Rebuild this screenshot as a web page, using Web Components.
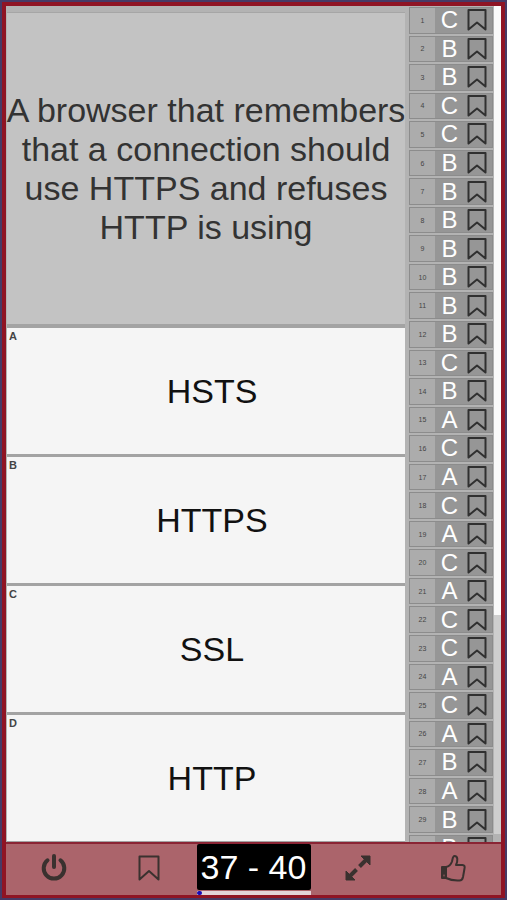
<!DOCTYPE html>
<html lang="en">
<head>
<meta charset="UTF-8">
<meta name="viewport" content="width=device-width, initial-scale=1">
<title>Quiz</title>
<style>
    body {
        margin: 0;
        font-family: "Liberation Sans", Arial, sans-serif;
    }
</style>
</head>
<body>
<quiz-app>
    <question-panel slot="question">A browser that remembers<br>that a connection should<br>use HTTPS and refuses<br>HTTP is using</question-panel>
    <answer-option slot="options" letter="A">HSTS</answer-option>
    <answer-option slot="options" letter="B">HTTPS</answer-option>
    <answer-option slot="options" letter="C">SSL</answer-option>
    <answer-option slot="options" letter="D">HTTP</answer-option>
    <answer-sheet slot="sheet" answers="CBBCCBBBBBBBCBACACACACCACABABB"></answer-sheet>
    <quiz-toolbar slot="toolbar">37 - 40</quiz-toolbar>
</quiz-app>

<script>
class QuizApp extends HTMLElement {
    constructor() {
        super();
        this.attachShadow({ mode: 'open' });
    }

    connectedCallback() {
        this.shadowRoot.innerHTML = `
            <style>
                :host {
                    display: flex;
                    height: 100vh;
                    box-sizing: border-box;
                    border: 2px solid #463a66;
                    background: #8f1424;
                }

                .frame {
                    flex: 1;
                    min-width: 0;
                    display: flex;
                    flex-direction: column;
                    border: 4px solid #8f1424;
                    border-bottom-width: 3px;
                }

                .content {
                    flex: 1;
                    min-height: 0;
                    display: flex;
                    background: #b3b3b3;
                }

                main {
                    flex: 1;
                    min-width: 0;
                    display: flex;
                    flex-direction: column;
                    padding: 0 1px;
                }

                .options {
                    flex: 1;
                    display: flex;
                    flex-direction: column;
                    gap: 3px;
                    padding-top: 4px;
                    padding-bottom: 1px;
                    background: #a3a3a3;
                }
            </style>
            <div class="frame">
                <div class="content">
                    <main>
                        <slot name="question"></slot>
                        <div class="options"><slot name="options"></slot></div>
                    </main>
                    <slot name="sheet"></slot>
                </div>
                <slot name="toolbar"></slot>
            </div>
        `;
    }
}

class QuestionPanel extends HTMLElement {
    constructor() {
        super();
        this.attachShadow({ mode: 'open' });
    }

    connectedCallback() {
        this.shadowRoot.innerHTML = `
            <style>
                :host {
                    display: flex;
                    flex: 0 0 312px;
                    align-items: center;
                    justify-content: center;
                    box-sizing: border-box;
                    margin-top: 6px;
                    padding-top: 1px;
                    border-top: 1px solid #a6a6a6;
                    background: #c3c3c3;
                    color: #333333;
                }

                p {
                    margin: 0;
                    font-size: 34px;
                    line-height: 39px;
                    text-align: center;
                    white-space: nowrap;
                }
            </style>
            <p><slot></slot></p>
        `;
    }
}

class AnswerOption extends HTMLElement {
    constructor() {
        super();
        this.attachShadow({ mode: 'open' });
    }

    connectedCallback() {
        this.shadowRoot.innerHTML = `
            <style>
                :host {
                    display: flex;
                    flex: 1;
                }

                button {
                    flex: 1;
                    position: relative;
                    display: flex;
                    align-items: center;
                    justify-content: center;
                    padding: 0 0 0 12px;
                    border: 0;
                    background: #f5f5f5;
                    color: #111111;
                    font: inherit;
                    font-size: 34px;
                    cursor: pointer;
                }

                .letter {
                    position: absolute;
                    top: 2px;
                    left: 2px;
                    color: #444444;
                    font-size: 11px;
                    font-weight: 700;
                    line-height: 12px;
                }
            </style>
            <button type="button">
                <span class="letter">${this.getAttribute('letter')}</span>
                <slot></slot>
            </button>
        `;
    }
}

class AnswerSheet extends HTMLElement {
    constructor() {
        super();
        this.attachShadow({ mode: 'open' });
    }

    connectedCallback() {
        const rows = [...this.getAttribute('answers')].map((answer, i) => `
            <li>
                <div class="row">
                    <span class="number">${i + 1}</span>
                    <span class="answer">${answer}</span>
                    <button type="button" aria-label="Bookmark question ${i + 1}">
                        <svg width="20" height="22" viewBox="0 0 20 22" fill="none" stroke="#303030" stroke-width="2" stroke-linejoin="round">
                            <path d="M1.5 1h17v19.5L10 13.5 1.5 20.5z"/>
                        </svg>
                    </button>
                </div>
            </li>
        `).join('');

        this.shadowRoot.innerHTML = `
            <style>
                :host {
                    display: flex;
                    flex: 0 0 95px;
                    min-height: 0;
                }

                ul {
                    flex: 1;
                    display: flex;
                    flex-direction: column;
                    margin: 0;
                    padding: 1px 1px 0 3px;
                    list-style: none;
                }

                li {
                    flex: 1 0 0;
                    display: flex;
                    flex-direction: column;
                    overflow: hidden;
                    min-height: 0;
                }

                /* the list is cut off partway through its last row */
                li:last-child {
                    flex: 0 0 7px;
                }

                .row {
                    flex: 1 0 26px;
                    display: grid;
                    grid-template-columns: 25px 1fr 31px;
                    align-items: center;
                    box-sizing: border-box;
                    margin-bottom: 2px;
                    border: 1px solid #8c8c8c;
                    background: #969696;
                }

                .number {
                    align-self: stretch;
                    display: flex;
                    align-items: center;
                    justify-content: center;
                    background: #acacac;
                    color: #444444;
                    font-size: 7px;
                }

                .answer {
                    padding-left: 3px;
                    color: #ffffff;
                    font-size: 24px;
                    line-height: 24px;
                    text-align: center;
                }

                button {
                    display: flex;
                    justify-content: center;
                    padding: 0;
                    border: 0;
                    background: none;
                    cursor: pointer;
                }

                .scrollbar {
                    width: 7px;
                    margin-bottom: 8px;
                    background: #cecece;
                }

                .thumb {
                    height: 73.5%;
                    background: #fafafa;
                }
            </style>
            <ul>${rows}</ul>
            <div class="scrollbar"><div class="thumb"></div></div>
        `;
    }
}

class QuizToolbar extends HTMLElement {
    constructor() {
        super();
        this.attachShadow({ mode: 'open' });
    }

    connectedCallback() {
        this.shadowRoot.innerHTML = `
            <style>
                :host {
                    display: grid;
                    grid-template-columns: 1fr 1fr 114px 1fr 1fr;
                    height: 53px;
                    box-sizing: border-box;
                    border-top: 2px solid #8a2434;
                    background: #ab646b;
                }

                button {
                    display: flex;
                    align-items: center;
                    justify-content: center;
                    padding: 0 0 4px;
                    border: 0;
                    background: none;
                    color: #3a312f;
                    cursor: pointer;
                }

                .counter {
                    display: flex;
                    flex-direction: column;
                    gap: 1px;
                }

                output {
                    flex: 1;
                    display: flex;
                    align-items: center;
                    justify-content: center;
                    border-radius: 2px;
                    background: #000000;
                    color: #ffffff;
                    font-size: 34px;
                }

                input {
                    appearance: none;
                    width: 100%;
                    height: 4px;
                    margin: 0;
                    background: #e2d3d9;
                }

                input::-webkit-slider-thumb {
                    appearance: none;
                    width: 5px;
                    height: 4px;
                    border-radius: 2px;
                    background: #1608b8;
                }
            </style>
            <button type="button" aria-label="Quit">
                <svg width="28" height="28" viewBox="0 0 28 28" fill="none" stroke="currentColor" stroke-width="4">
                    <path d="M7.5 6.300a10.300 10.300 0 1 0 13 0" stroke-linecap="round"/>
                    <path d="M14 2v11" stroke-linecap="round"/>
                </svg>
            </button>
            <button type="button" aria-label="Bookmark">
                <svg width="22" height="26" viewBox="0 0 22 26" fill="none" stroke="currentColor" stroke-width="2" stroke-linejoin="round">
                    <path d="M1.5 1.5h19v23L11 16 1.5 24.5z"/>
                </svg>
            </button>
            <div class="counter">
                <output aria-label="Question"><slot></slot></output>
                <input type="range" min="1" max="40" value="1" aria-label="Progress">
            </div>
            <button type="button" aria-label="Full screen">
                <svg width="26" height="26" viewBox="0 0 26 26" fill="currentColor" stroke="currentColor">
                    <path d="M16 1h9v9zM1 16v9h9z" stroke-width="1" stroke-linejoin="round"/>
                    <path d="M14.500 11.500L21 5M11.500 14.500L5 21" stroke-width="4"/>
                </svg>
            </button>
            <button type="button" aria-label="Like">
                <svg width="26" height="28" viewBox="0 0 26 28" fill="none" stroke="currentColor" stroke-width="2" stroke-linejoin="round" stroke-linecap="round">
                    <path d="M2 13h4v11H2z" fill="currentColor"/>
                    <path d="M6 13c3-.5 5-2.500 6-5.500.6-2 .6-5.500 2.500-5.500 3.500 0 3.500 4.500 1.500 9h6.500c2 0 2.500 1.500 2 3.500L23 23c-.5 2.500-1.500 3.500-3.500 3.500-5 .3-9.500-.5-13.500-2.500"/>
                    <path d="M4 21v1" stroke="#ab646b" stroke-width="1"/>
                </svg>
            </button>
        `;
    }
}

customElements.define('quiz-app', QuizApp);
customElements.define('question-panel', QuestionPanel);
customElements.define('answer-option', AnswerOption);
customElements.define('answer-sheet', AnswerSheet);
customElements.define('quiz-toolbar', QuizToolbar);
</script>
</body>
</html>
